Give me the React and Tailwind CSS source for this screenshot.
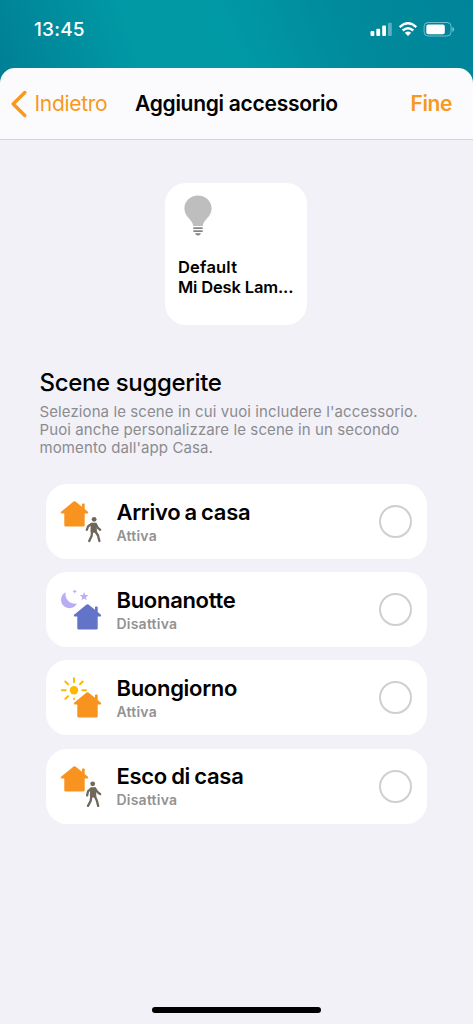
import React, { useState } from "react";

const scenes = [
  { name: "Arrivo a casa", status: "Attiva", icon: ArriveIcon },
  { name: "Buonanotte", status: "Disattiva", icon: NightIcon },
  { name: "Buongiorno", status: "Attiva", icon: MorningIcon },
  { name: "Esco di casa", status: "Disattiva", icon: LeaveIcon },
];

function House({ x = 0, y = 0, color }) {
  return (
    <path
      transform={`translate(${x} ${y})`}
      d="M13.6 .5Q14.5 -.2 15.4 .5L22 5.8V3.2Q22 2.5 22.7 2.5H24Q24.7 2.5 24.7 3.2V8L27.9 10.8Q28.8 12.4 27.3 12.5H24.7V24.2Q24.7 25.5 23.4 25.5H5.6Q4.3 25.5 4.3 24.2V12.5H1.7Q.2 12.4 1.1 10.8Z"
      fill={color}
    />
  );
}

function SceneSvg({ children }) {
  return (
    <svg width="42" height="42" viewBox="0 0 42 42" className="mt-px shrink-0">
      {children}
    </svg>
  );
}

function ArriveIcon() {
  return (
    <SceneSvg>
      <House color="#f7931e" />
      <g fill="none" stroke="#6f675c" strokeWidth="2.3" strokeLinecap="round" strokeLinejoin="round">
        <circle cx="34.1" cy="18.3" r="2.4" fill="#6f675c" stroke="none" />
        <path d="M31.9 23H35.4L35.8 30.5H31.6Z" fill="#6f675c" />
        <path d="M31.5 23L28.2 25.2L26.8 28.8M35.8 23L37.6 26.6L40.2 28.8" />
        <path d="M32 31L31.6 35L29.2 40M35.4 30.5L38 34.5L39.4 40" />
      </g>
    </SceneSvg>
  );
}

function LeaveIcon() {
  return (
    <SceneSvg>
      <House color="#f7931e" />
      <g fill="none" stroke="#6f675c" strokeWidth="2.3" strokeLinecap="round" strokeLinejoin="round">
        <circle cx="32.7" cy="17.8" r="2.4" fill="#6f675c" stroke="none" />
        <path d="M31.3 22.5H34.8L35.2 30.3H31Z" fill="#6f675c" />
        <path d="M31 22.7L28 25.4L27.1 29.4M35.2 22.5L37.4 26L40.2 28.1" />
        <path d="M31.4 30.3L30.6 35L28 39.9M34.8 30.3L36.8 34.5L38.2 39.9" />
      </g>
    </SceneSvg>
  );
}

function NightIcon() {
  return (
    <SceneSvg>
      <path d="M5.7 3.3A8.4 8.4 0 1 0 17 14.5A9.5 9.5 0 0 1 5.7 3.3Z" fill="#b9aef5" />
      <path d="M24.1 3L25.2 6.1L28.4 6.2L25.9 8.2L26.8 11.3L24.1 9.5L21.4 11.3L22.3 8.2L19.8 6.2L23 6.1Z" fill="#b9aef5" />
      <path d="M14.7 .4L15.4 1.8L16.8 2.5L15.4 3.2L14.7 4.6L14 3.2L12.6 2.5L14 1.8Z" fill="#b9aef5" />
      <House x={13} y={15} color="#6373c8" />
    </SceneSvg>
  );
}

function MorningIcon() {
  return (
    <SceneSvg>
      <circle cx="14" cy="13.2" r="4.2" fill="#fcb900" />
      <path
        d="M14 1.2V5M14 21.5V22M1.9 13.2H5.6M22.4 13.2H26M5.3 4.5L8 7.2M22.7 4.5L20 7.2M5.3 21.9L8 19.2"
        stroke="#fcb900"
        strokeWidth="2"
        strokeLinecap="round"
      />
      <House x={13} y={15} color="#f7931e" />
    </SceneSvg>
  );
}

function StatusBar() {
  return (
    <div className="flex h-[68px] justify-between pl-[34px] pr-[18px] text-white">
      <span className="mt-[18px] text-[19px] leading-6 font-medium tracking-[0.2px]">13:45</span>
      <svg width="85" height="16" viewBox="0 0 85 16" className="mt-[21px]">
        <g fill="#fff">
          <rect x="0.5" y="10" width="3.8" height="5" rx="1" />
          <rect x="6.3" y="7.8" width="3.8" height="7.2" rx="1" />
          <rect x="12.2" y="4.6" width="3.8" height="10.4" rx="1" />
          <rect x="18" y="1.8" width="3.8" height="13.2" rx="1" opacity="0.35" />
          <rect x="56.3" y="3.6" width="18.5" height="9.6" rx="2" />
          <path d="M82.4 6Q84.1 6.5 84.1 8.4T82.4 10.8Z" opacity="0.5" />
          <path d="M38 15L34.8 11.8Q38 9.2 41.2 11.8Z" />
        </g>
        <g fill="none" stroke="#fff">
          <path d="M29.7 6.2Q38 -1.5 46.3 6.2M32.7 9.5Q38 5 43.3 9.5" strokeWidth="2.4" />
          <rect x="54.1" y="1.5" width="27" height="13.5" rx="4" opacity="0.45" />
        </g>
      </svg>
    </div>
  );
}

export default function App() {
  const [selected, setSelected] = useState([]);

  const toggle = (name) => {
    setSelected(selected.includes(name) ? selected.filter((n) => n !== name) : [...selected, name]);
  };

  return (
    <div className="flex h-[1024px] w-[473px] flex-col overflow-hidden bg-[#f2f1f7] font-['Inter',sans-serif] text-black">
      <div className="bg-[linear-gradient(70deg,#007b92_0%,#008c9d_18%,#0099a4_32%,#009aa5_50%,#008a9b_75%,#00849a_100%)]">
        <StatusBar />
        <header className="flex h-[72px] items-center rounded-t-[15px] border-b border-[#d5d5d8] bg-[#fbfbfd] pl-[11px] pr-[21px] text-[21px]">
          <button className="flex w-[124px] items-center gap-[7.5px] text-[#f8981d]">
            <svg width="16" height="28" viewBox="0 0 16 28" fill="none" stroke="currentColor" strokeWidth="3.4" strokeLinecap="round" strokeLinejoin="round">
              <path d="M13.8 2.5L2.2 14L13.8 25.5" />
            </svg>
            <span className="tracking-[-0.3px]">Indietro</span>
          </button>
          <h1 className="font-semibold tracking-[-0.28px] whitespace-nowrap">Aggiungi accessorio</h1>
          <button className="ml-auto font-semibold tracking-[-0.4px] text-[#f8981d]">Fine</button>
        </header>
      </div>

      <main className="flex flex-1 flex-col">
        <div className="mr-[166px] ml-[165px] mt-[43px] h-[142px] rounded-[21px] bg-white px-[13px] pt-3">
          <svg width="28" height="42" viewBox="0 0 28 42" className="ml-[6px]">
            <path d="M14 .5C6.3.5.4 6.2.4 13.4C.4 22 8.8 24.5 9.2 31H18.8C19.2 24.5 27.6 22 27.6 13.4C27.6 6.2 21.7.5 14 .5Z" fill="#bebebe" />
            <path d="M10 33.1H18M10 36.1H18" stroke="#858585" strokeWidth="1.8" strokeLinecap="round" />
            <path d="M11 38.2H17Q16.2 40.6 14 40.6T11 38.2Z" fill="#858585" />
          </svg>
          <div className="mt-[20px] text-[16.5px] leading-5 font-semibold tracking-[-0.15px] whitespace-nowrap">
            <p className="tracking-[0.2px]">Default</p>
            <p>Mi Desk Lam...</p>
          </div>
        </div>

        <section className="mt-[43px] px-[39.5px]">
          <h2 className="text-[24px] leading-[30px] font-medium tracking-[-0.35px]">Scene suggerite</h2>
          <p className="mt-[5px] text-[15px] leading-[18px] tracking-[0.1px] whitespace-nowrap text-[#8b8b90]">
            Seleziona le scene in cui vuoi includere l'accessorio.
            <br />
            Puoi anche personalizzare le scene in un secondo
            <br />
            momento dall'app Casa.
          </p>
        </section>

        <div className="mt-[27px] flex flex-col gap-[13.2px] px-[46px]">
          {scenes.map(({ name, status, icon: Icon }) => (
            <button key={name} onClick={() => toggle(name)} className="flex h-[75px] items-center rounded-[21px] bg-white pl-[14px] pr-[15px] text-left">
              <Icon />
              <div className="ml-[14.5px] flex-1">
                <p className="text-[22px] leading-7 font-semibold tracking-[-0.3px] [word-spacing:-1px]">{name}</p>
                <p className="text-[14px] leading-5 font-semibold tracking-[0.22px] text-[#929292]">{status}</p>
              </div>
              <span className={`size-[33px] rounded-full border-2 border-[#cfcfcf] ${selected.includes(name) ? "bg-[#f8981d]" : ""}`} />
            </button>
          ))}
        </div>

        <div className="mx-auto mt-auto mb-[11px] h-[6px] w-[169px] rounded-full bg-black" />
      </main>
    </div>
  );
}
